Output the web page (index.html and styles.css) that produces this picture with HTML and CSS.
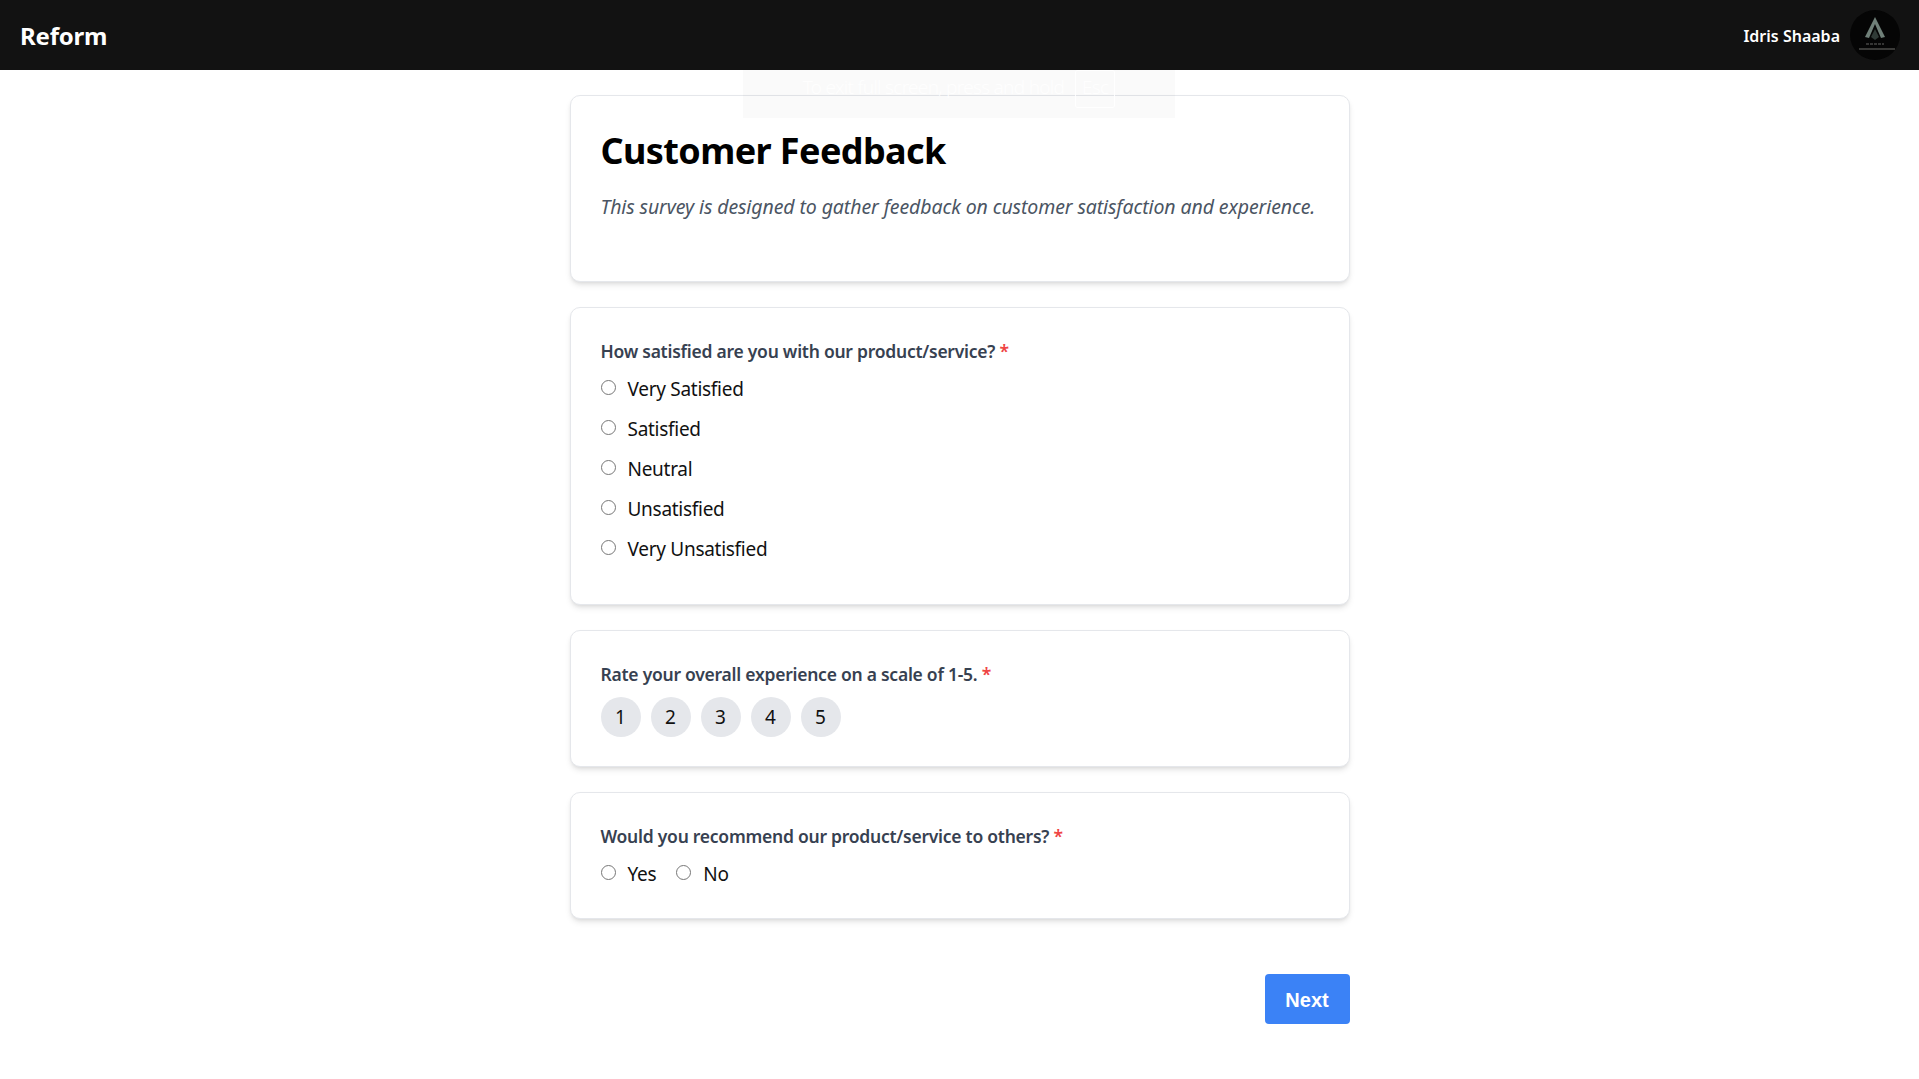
FILE: index.html
```html
<!DOCTYPE html>
<html lang="en">

<head>
  <meta charset="UTF-8">
  <meta name="viewport" content="width=device-width, initial-scale=1.0">
  <title>Reform</title>

  <link rel="stylesheet" href="styles.css">
</head>

<body>
  <header class="topbar">
    <span class="brand">Reform</span>
    <div class="user">
      <span class="user-name">Idris Shaaba</span>
      <svg class="avatar" viewBox="0 0 50 50" aria-hidden="true">
        <circle cx="25" cy="25" r="25" fill="#050505" />
        <path d="M25 7 L35 27 L31 28 L25 14 L19 28 L15 27 Z" fill="#6f7f78" />
        <path d="M25 19 L29 27 L25 30 L21 27 Z" fill="#2f3a36" />
        <path d="M16 34 H34" stroke="#464644" stroke-width="1.500" stroke-dasharray="3 1" />
        <path d="M9 39 H45" stroke="#4c4c4a" stroke-width="1.500" />
      </svg>
    </div>
  </header>

  <div class="exit-notice">
    <span class="exit-text">To exit full screen, press and hold</span>
    <span class="exit-key">Esc</span>
  </div>

  <main class="survey">
    <section class="card card-intro">
      <h1>Customer Feedback</h1>
      <p class="intro-text">This survey is designed to gather feedback on customer satisfaction and experience.</p>
    </section>

    <section class="card">
      <p class="question">How satisfied are you with our product/service? <span class="required">*</span></p>
      <label class="option"><input type="radio" name="satisfied">Very Satisfied</label>
      <label class="option"><input type="radio" name="satisfied">Satisfied</label>
      <label class="option"><input type="radio" name="satisfied">Neutral</label>
      <label class="option"><input type="radio" name="satisfied">Unsatisfied</label>
      <label class="option"><input type="radio" name="satisfied">Very Unsatisfied</label>
    </section>

    <section class="card card-scale">
      <p class="question">Rate your overall experience on a scale of 1-5. <span class="required">*</span></p>
      <div class="scale">
        <button type="button">1</button>
        <button type="button">2</button>
        <button type="button">3</button>
        <button type="button">4</button>
        <button type="button">5</button>
      </div>
    </section>

    <section class="card card-last">
      <p class="question">Would you recommend our product/service to others? <span class="required">*</span></p>
      <div class="inline-options">
        <label class="option"><input type="radio" name="recommend">Yes</label>
        <label class="option"><input type="radio" name="recommend">No</label>
      </div>
    </section>

    <div class="actions">
      <button type="button" class="next-btn">Next</button>
    </div>
  </main>
</body>

</html>
```

FILE: styles.css
```css
* {
  box-sizing: border-box;
}

body {
  background: #fff;
  color: #111;
  font-family: "Noto Sans", sans-serif;
  margin: 0;
}

.topbar {
  align-items: center;
  background: #121212;
  color: #fff;
  display: flex;
  height: 70px;
  justify-content: space-between;
  padding: 0 19px 0 20px;
}

.brand {
  font-size: 24px;
  font-weight: 700;
  letter-spacing: -0.2px;
  padding-top: 1px;
}

.user {
  align-items: center;
  display: flex;
  gap: 10px;
}

.user-name {
  font-size: 16px;
  font-weight: 600;
  padding-top: 2px;
}

.avatar {
  display: block;
  height: 50px;
  width: 50px;
}

.exit-notice {
  align-items: flex-start;
  background: rgba(0, 0, 0, 0.02);
  color: rgba(255, 255, 255, 0.9);
  display: flex;
  font-size: 19px;
  font-weight: 300;
  gap: 11px;
  height: 48px;
  justify-content: center;
  left: 743px;
  letter-spacing: -0.7px;
  position: absolute;
  top: 70px;
  white-space: nowrap;
  width: 432px;
  z-index: 2;
}

.exit-text {
  line-height: 34px;
}

.exit-key {
  border: 1px solid rgba(255, 255, 255, 0.9);
  border-radius: 2px;
  height: 38px;
  line-height: 32px;
  text-align: center;
  width: 40px;
}

.survey {
  margin: 0 auto;
  padding-top: 25px;
  width: 780px;
}

.card {
  background: #fff;
  border: 1px solid #e5e7eb;
  border-radius: 10px;
  box-shadow: 0 4px 6px -1px rgba(0, 0, 0, 0.1), 0 2px 4px -2px rgba(0, 0, 0, 0.1);
  margin-bottom: 25px;
  padding: 30px;
}

.card-intro {
  height: 187px;
}

.card-scale {
  padding-bottom: 29px;
}

.card-last {
  padding-bottom: 31px;
}

h1 {
  color: #000;
  font-size: 36px;
  font-weight: 700;
  letter-spacing: -0.6px;
  line-height: 50px;
  margin: 0 0 16px;
}

.intro-text {
  color: #4b5563;
  font-size: 19.500px;
  font-style: italic;
  letter-spacing: -0.1px;
  line-height: 30px;
  margin: 0;
}

.question {
  color: #374151;
  font-size: 17.500px;
  font-weight: 600;
  letter-spacing: -0.25px;
  line-height: 27px;
  margin: 0 0 9px;
}

.required {
  color: #ef4444;
}

.option {
  align-items: center;
  display: flex;
  font-size: 19px;
  height: 28px;
  letter-spacing: -0.28px;
  margin-bottom: 12px;
  padding-top: 2px;
}

.option input {
  height: 15px;
  margin: 0 12px 0 0;
  position: relative;
  top: -2px;
  width: 15px;
}

.scale {
  display: flex;
  gap: 10px;
}

.scale button {
  background: #e5e7eb;
  border: 0;
  border-radius: 50%;
  color: #111;
  font-family: inherit;
  font-size: 19px;
  height: 40px;
  padding: 0;
  width: 40px;
}

.inline-options {
  display: flex;
  gap: 20px;
}

.inline-options .option {
  margin-bottom: 0;
}

.actions {
  display: flex;
  justify-content: flex-end;
  padding-top: 30px;
}

.next-btn {
  background: #3b82f6;
  border: 0;
  border-radius: 4px;
  color: #fff;
  font-family: "Liberation Sans", sans-serif;
  font-size: 20px;
  font-weight: 700;
  height: 50px;
  padding: 2px 0 0;
  width: 85px;
}
```
